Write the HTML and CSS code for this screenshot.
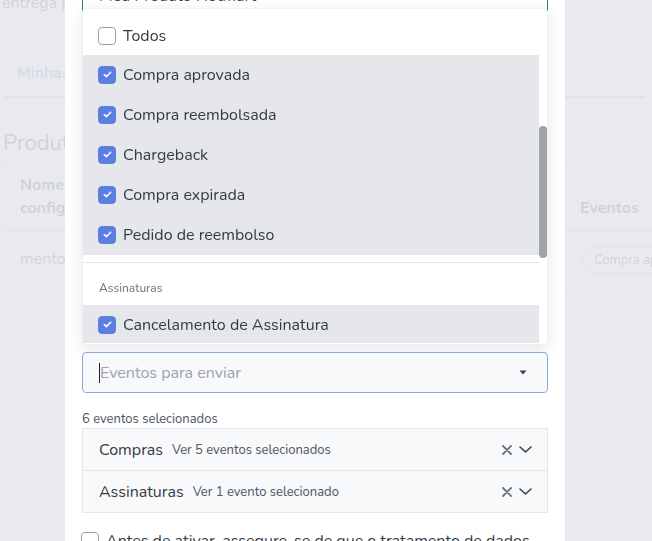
FILE: index.html
```html
<!DOCTYPE html>
<html lang="pt-BR">
<head>
<meta charset="utf-8">
<title>Integração</title>
<link rel="stylesheet" href="styles.css">
</head>
<body>
<div class="page">
  <p class="intro">entrega para o seu cliente de forma automática.</p>
  <nav class="tabs">
    <span class="tab active">Minhas integrações</span>
  </nav>
  <h2 class="title">Produtos</h2>
  <div class="table">
    <div class="row head">
      <div class="cell">Nome configuração</div>
      <div class="cell">Produto</div>
      <div class="cell">Eventos</div>
    </div>
    <div class="row">
      <div class="cell">mentoria</div>
      <div class="cell">Meu Produto Hotmart</div>
      <div class="cell"><span class="pill">Compra aprovada</span></div>
    </div>
  </div>
</div>

<div class="backdrop"></div>

<div class="modal">
  <div class="modal-body">
    <div class="select product">
      <span class="select-value">Meu Produto Hotmart</span>
    </div>

    <div class="events-field">
      <div class="menu">
        <div class="scroll">
          <div class="option first"><span class="box"></span><span>Todos</span></div>
          <div class="option on"><span class="box checked"><svg viewBox="0 0 10 8" width="9" height="7"><path d="M1.3 4.2 L3.8 6.4 L8.7 1.4" fill="none" stroke="#fff" stroke-width="1.8" stroke-linecap="round" stroke-linejoin="round"/></svg></span><span>Compra aprovada</span></div>
          <div class="option on"><span class="box checked"><svg viewBox="0 0 10 8" width="9" height="7"><path d="M1.3 4.2 L3.8 6.4 L8.7 1.4" fill="none" stroke="#fff" stroke-width="1.8" stroke-linecap="round" stroke-linejoin="round"/></svg></span><span>Compra reembolsada</span></div>
          <div class="option on"><span class="box checked"><svg viewBox="0 0 10 8" width="9" height="7"><path d="M1.3 4.2 L3.8 6.4 L8.7 1.4" fill="none" stroke="#fff" stroke-width="1.8" stroke-linecap="round" stroke-linejoin="round"/></svg></span><span>Chargeback</span></div>
          <div class="option on"><span class="box checked"><svg viewBox="0 0 10 8" width="9" height="7"><path d="M1.3 4.2 L3.8 6.4 L8.7 1.4" fill="none" stroke="#fff" stroke-width="1.8" stroke-linecap="round" stroke-linejoin="round"/></svg></span><span>Compra expirada</span></div>
          <div class="option on"><span class="box checked"><svg viewBox="0 0 10 8" width="9" height="7"><path d="M1.3 4.2 L3.8 6.4 L8.7 1.4" fill="none" stroke="#fff" stroke-width="1.8" stroke-linecap="round" stroke-linejoin="round"/></svg></span><span>Pedido de reembolso</span></div>
          <div class="thumb"></div>
        </div>
        <div class="divider"></div>
        <div class="group-label">Assinaturas</div>
        <div class="option on short"><span class="box checked"><svg viewBox="0 0 10 8" width="9" height="7"><path d="M1.3 4.2 L3.8 6.4 L8.7 1.4" fill="none" stroke="#fff" stroke-width="1.8" stroke-linecap="round" stroke-linejoin="round"/></svg></span><span>Cancelamento de Assinatura</span></div>
      </div>

      <div class="select events">
        <span class="caret"></span>
        <span class="placeholder">Eventos para enviar</span>
        <svg class="arrow" viewBox="0 0 8 5" width="8" height="5"><path d="M0.5 0.5 H7.5 L4 4.5 Z" fill="#374151"/></svg>
      </div>
    </div>

    <p class="count">6 eventos selecionados</p>

    <div class="accordion">
      <div class="acc-row">
        <span class="acc-title">Compras</span>
        <span class="acc-sub">Ver 5 eventos selecionados</span>
        <span class="acc-actions">
          <svg viewBox="0 0 10 10" width="10" height="10"><path d="M1 1 L9 9 M9 1 L1 9" stroke="#6b7280" stroke-width="1.8" stroke-linecap="round"/></svg>
          <svg viewBox="0 0 13 7" width="13" height="7"><path d="M1 1 L6.5 6 L12 1" fill="none" stroke="#374151" stroke-width="1.6" stroke-linecap="round" stroke-linejoin="round"/></svg>
        </span>
      </div>
      <div class="acc-row">
        <span class="acc-title">Assinaturas</span>
        <span class="acc-sub">Ver 1 evento selecionado</span>
        <span class="acc-actions">
          <svg viewBox="0 0 10 10" width="10" height="10"><path d="M1 1 L9 9 M9 1 L1 9" stroke="#6b7280" stroke-width="1.8" stroke-linecap="round"/></svg>
          <svg viewBox="0 0 13 7" width="13" height="7"><path d="M1 1 L6.5 6 L12 1" fill="none" stroke="#374151" stroke-width="1.6" stroke-linecap="round" stroke-linejoin="round"/></svg>
        </span>
      </div>
    </div>

    <label class="consent"><span class="box"></span><span>Antes de ativar, assegure-se de que o tratamento de dados</span></label>
  </div>
</div>
</body>
</html>
```

FILE: styles.css
```css
* { box-sizing: border-box; }
html, body { margin: 0; height: 100%; }
body {
  font-family: "Nunito", "Lato", "Noto Sans", sans-serif;
  color: #353b45;
  background: #fff;
  overflow: hidden;
}

/* background page */
.page { padding: 0 0 0 3px; }
.intro { margin: -9px 0 0 -1px; font-size: 16px; line-height: 24px; color: #4b5563; white-space: nowrap; }
.tabs { margin-top: 47px; border-bottom: 2px solid #c3c8d0; width: 640px; margin-left: 2px; padding-left: 12px; }
.tab { display: inline-block; font-size: 16px; line-height: 22px; padding: 0 0 12px; color: #6d8ae0; font-weight: 600; }
.title { margin: 31px 0 0; font-size: 22px; line-height: 28px; font-weight: 400; color: #555; }
.table { margin-top: 6px; border: 1px solid #dde0e5; border-right: 0; width: 760px; }
.row { display: grid; grid-template-columns: 160px 402px 1fr; border-top: 1px solid #d1d5db; }
.row.head { border-top: 0; }
.cell { padding: 10px 16px; font-size: 16px; line-height: 23px; color: #4b5563; white-space: nowrap; }
.head .cell { font-weight: 700; display: flex; align-items: flex-end; white-space: normal; }
.head .cell:last-child { padding-left: 14px; }
.row:not(.head) .cell { padding: 14px 16px; line-height: 28px; }
.row:not(.head) .cell:last-child { padding-left: 15px; }
.pill { display: inline-block; border: 1px solid #c3c8d0; border-radius: 14px; padding: 0 12px; font-size: 13px; line-height: 26px; }

.backdrop {
  position: fixed; inset: 0;
  background: rgba(229, 231, 235, 0.86);
}

/* modal */
.modal {
  position: fixed; top: 0; bottom: 0; left: 65px; width: 500px;
  background: #fff;
}
.modal-body { padding: 0 17px; }

.select {
  border-radius: 4px;
  display: flex; align-items: center;
  height: 41px;
  padding: 0 16px;
  font-size: 16px;
}
.product { margin-top: -25px; height: 42px; border: 1px solid #1f8a55; color: #374151; }

.events-field { position: relative; margin-top: 335px; }
.events { border: 1px solid #8ea7d9; background: #f8f9fb; position: relative; }
.caret { width: 1px; height: 20px; background: #222; }
.placeholder { color: #9ca3af; flex: 1; }
.arrow { margin-right: 4px; }

.menu {
  position: absolute; left: 0; right: 0; bottom: calc(100% + 7px);
  background: #fff;
  border: 1px solid #eef0f3;
  border-radius: 4px;
  box-shadow: 0 4px 14px rgba(31, 41, 55, 0.12);
  padding-bottom: 1px;
}
.scroll { position: relative; height: 249px; padding: 6px 8px 3px 0; overflow: hidden; }
.thumb { position: absolute; right: 0; bottom: 0; width: 8px; height: 132px; border-radius: 4px; background: #9fa4ab; }
.option {
  display: flex; align-items: center; gap: 7px;
  height: 40px; padding-left: 15px; padding-bottom: 1px;
  font-size: 16px; color: #353b45;
}
.option.first { padding-bottom: 0; padding-top: 1px; }
.option.on { background: #e5e7eb; }
.option.short { height: 38px; margin-right: 8px; padding-bottom: 0; padding-top: 1px; }
.box {
  width: 18px; height: 18px; flex: none;
  border: 1px solid #9a9fa6; border-radius: 4px; background: #fff;
  display: inline-flex; align-items: center; justify-content: center;
}
.box.checked { border-color: #5a7ee1; background: #5a7ee1; }
.divider { height: 1px; background: #e3e6ea; margin: 4px 8px 0 0; }
.group-label { padding: 17px 16px 9px; font-size: 12px; line-height: 16px; color: #6b7280; }

.count { margin: 18px 0 1px; font-size: 13px; line-height: 16px; color: #4b5563; }

.accordion { border: 1px solid #e5e7eb; background: #f8f9fa; }
.acc-row { display: flex; align-items: center; height: 41px; padding: 0 15px 0 16px; }
.acc-row + .acc-row { border-top: 1px solid #e5e7eb; height: 42px; }
.acc-title { font-size: 16px; color: #353b45; }
.acc-sub { font-size: 13px; color: #4b5563; margin-left: 9px; flex: 1; }
.acc-actions { display: flex; align-items: center; gap: 7px; }

.consent { display: flex; align-items: center; gap: 7px; margin-top: 17px; margin-left: -1px; font-size: 16px; color: #353b45; }
.consent .box { border-color: #9a9fa6; }
```
